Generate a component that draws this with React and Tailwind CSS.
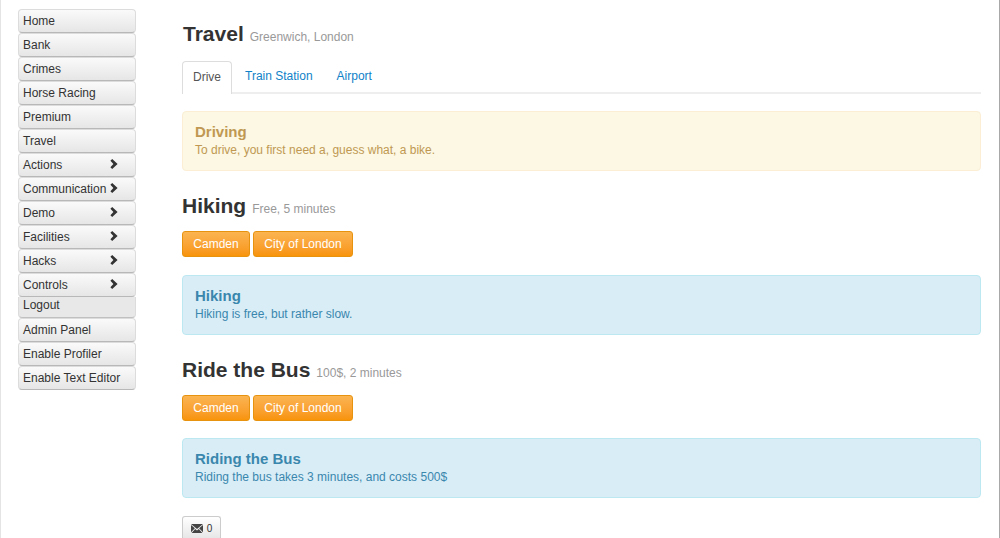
const MenuItem = ({ label, arrow }) => (
  <a className="flex h-6 w-[118px] items-start justify-between whitespace-nowrap rounded-[4px] border border-[#dcdcdc] border-b-[#b8b8b8] bg-gradient-to-b from-[#fafafa] to-[#e6e6e6] pl-1 pr-[17px] pt-[3px] text-[12px] leading-[17px] text-[#333]">
    <span>{label}</span>
    {arrow && (
      <svg viewBox="0 0 8 10" className="mt-[2px] h-[10px] w-[8px] shrink-0" fill="#333">
        <path d="M2.2 0 7.6 5 2.2 10 .4 8.2 3.4 5 .4 1.8z" />
      </svg>
    )}
  </a>
)

const Heading = ({ title, note, className }) => (
  <h2 className={`font-bold leading-[28px] text-[#333] ${className}`}>
    <span className="text-[21px]">{title}</span>
    <span className="ml-[6px] text-[12px] font-normal text-[#999]">{note}</span>
  </h2>
)

const Alert = ({ title, text, tone }) => (
  <div className={`rounded-[4px] border px-[12px] pb-[11px] pt-[11px] ${tone}`}>
    <h4 className="text-[15px] font-bold leading-[18px]">{title}</h4>
    <p className="text-[12px] leading-[18px]">{text}</p>
  </div>
)

const Destinations = () => (
  <div className="mt-[8px] flex gap-[3px]">
    <button type="button" className="h-[26px] w-[68px] rounded-[3px] border border-[#e8930f] bg-gradient-to-b from-[#fbb450] to-[#f89406] text-[12px] text-white">Camden</button>
    <button type="button" className="h-[26px] w-[100px] rounded-[3px] border border-[#e8930f] bg-gradient-to-b from-[#fbb450] to-[#f89406] text-[12px] text-white">City of London</button>
  </div>
)

const App = () => {
  const menu = [
    ['Home'], ['Bank'], ['Crimes'], ['Horse Racing'], ['Premium'], ['Travel'],
    ['Actions', true], ['Communication', true], ['Demo', true], ['Facilities', true], ['Hacks', true], ['Controls', true],
  ]

  return (
    <div className="flex h-[538px] overflow-hidden border-x border-l-[#e4e4e4] border-r-[#a8a8a8] bg-white font-['Liberation_Sans',Arial,sans-serif]">
      <nav className="ml-[17px] w-[118px] shrink-0 pt-[9px]">
        {menu.map(([label, arrow]) => <MenuItem key={label} label={label} arrow={arrow} />)}
        <a className="block h-[21px] w-[118px] rounded-b-[4px] border border-[#dcdcdc] border-t-0 border-b-[#c0c0c0] bg-[#e8e8e8] pl-1 text-[12px] leading-[16px] text-[#333]">Logout</a>
        <MenuItem label="Admin Panel" />
        <MenuItem label="Enable Profiler" />
        <MenuItem label="Enable Text Editor" />
      </nav>

      <main className="ml-[46px] w-[799px] shrink-0 pt-[20px]">
        <Heading title="Travel" note="Greenwich, London" className="pl-[1px]" />
        <div className="mt-[10px] flex h-[33px] border-b-2 border-b-[#eee] text-[12px]">
          <a className="h-[33px] rounded-t-[4px] border border-[#ddd] border-b-0 bg-white px-[10px] pt-[7px] leading-[17px] text-[#555]">Drive</a>
          <a className="ml-[3px] px-[10px] pt-[7px] leading-[17px] text-[#0f82c8]">Train Station</a>
          <a className="ml-[4px] px-[10px] pt-[7px] leading-[17px] text-[#0f82c8]">Airport</a>
        </div>

        <div className="mt-[17px]">
          <Alert title="Driving" text="To drive, you first need a, guess what, a bike." tone="border-[#fbeed5] bg-[#fcf8e3] text-[#c09853]" />
        </div>

        <Heading title="Hiking" note="Free, 5 minutes" className="mt-[21px]" />
        <Destinations />
        <div className="mt-[18px]">
          <Alert title="Hiking" text="Hiking is free, but rather slow." tone="border-[#bce8f1] bg-[#d9edf7] text-[#3a87ad]" />
        </div>

        <Heading title="Ride the Bus" note="100$, 2 minutes" className="mt-[21px]" />
        <Destinations />
        <div className="mt-[17px]">
          <Alert title="Riding the Bus" text="Riding the bus takes 3 minutes, and costs 500$" tone="border-[#bce8f1] bg-[#d9edf7] text-[#3a87ad]" />
        </div>

        <button type="button" className="mt-[18px] flex h-[24px] w-[39px] items-center justify-center gap-[4px] rounded-[3px] border border-[#ccc] border-b-[#b3b3b3] bg-gradient-to-b from-white to-[#e6e6e6] text-[10px] text-[#333]">
          <svg viewBox="0 0 12 9" className="h-[9px] w-[12px]" fill="#444">
            <path d="M0 0h12L6 4.9z" />
            <path d="M0 .9v7.3l3.9-3.9zM12 .9v7.3L8.1 4.3zM.6 9h10.8L7.8 5.1 6 6.5 4.2 5.1z" />
          </svg>
          0
        </button>
      </main>
    </div>
  )
}

export default App
